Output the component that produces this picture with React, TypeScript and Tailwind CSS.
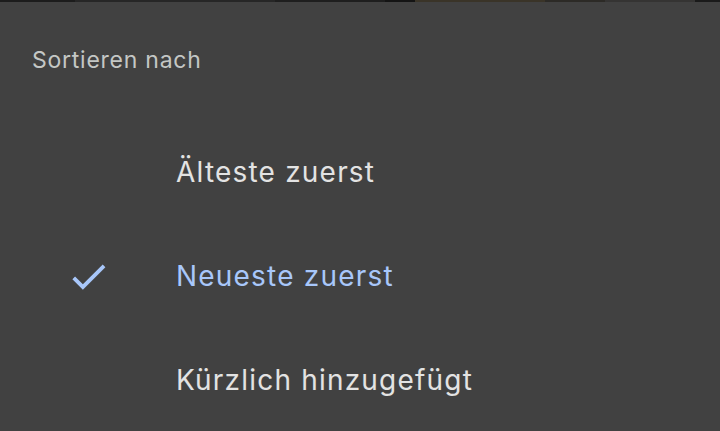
import React from "react";

const items = [
  { label: "Älteste zuerst", selected: false },
  { label: "Neueste zuerst", selected: true },
  { label: "Kürzlich hinzugefügt", selected: false },
];

export default function App() {
  return (
    <div
      className="w-[720px] h-[431px] bg-[#414141] flex flex-col overflow-hidden"
      style={{ fontFamily: "Inter, Roboto, 'Noto Sans', sans-serif" }}
    >
      <div className="h-[2px] flex shrink-0">
        <div className="w-[75px] bg-[#1c1c1c]" />
        <div className="w-[200px] bg-[#262626]" />
        <div className="w-[110px] bg-[#1e1e1e]" />
        <div className="w-[30px] bg-[#141414]" />
        <div className="w-[130px] bg-[#3a3428]" />
        <div className="w-[60px] bg-[#2c2a26]" />
        <div className="w-[90px] bg-[#353433]" />
        <div className="flex-1 bg-[#1a1a1a]" />
      </div>
      <div className="h-[118px] shrink-0 pt-[42px] pl-[32px]">
        <div className="text-[23px] leading-[32px] text-[#c4c7c5] tracking-[0.75px]">Sortieren nach</div>
      </div>
      {items.map((it) => (
        <div key={it.label} className="h-[104px] shrink-0 flex items-center pl-[66px]">
          <div className="w-[45px] h-[45px] shrink-0">
            {it.selected && (
              <svg viewBox="0 0 24 24" width="45" height="45" fill="#a8c7fa">
                <path d="M9 16.17L4.83 12l-1.42 1.41L9 19 21 7l-1.41-1.41z" />
              </svg>
            )}
          </div>
          <div
            className={
              "ml-[65px] text-[28px] leading-[36px] tracking-[1.2px] " +
              (it.selected ? "text-[#a8c7fa]" : "text-[#e3e3e3]")
            }
          >
            {it.label}
          </div>
        </div>
      ))}
    </div>
  );
}
